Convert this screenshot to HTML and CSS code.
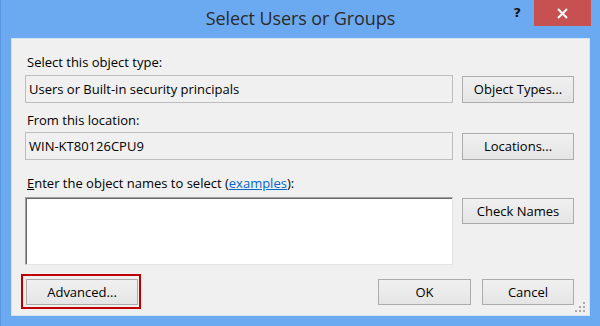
FILE: index.html
```html
<!DOCTYPE html>
<html lang="en">
<head>
  <meta charset="UTF-8">
  <meta name="viewport" content="width=device-width, initial-scale=1.0">
  <title>Select Users or Groups</title>
  <link rel="stylesheet" href="styles.css">
</head>
<body>
  <div class="window">
    <div class="titlebar">
      <span></span>
      <h1 class="title">Select Users or Groups</h1>
      <div class="controls">
        <span class="help">?</span>
        <span class="close">
          <svg width="11" height="11" viewBox="0 0 11 11">
            <path d="M1 1 L10 10 M10 1 L1 10" stroke="#fff" stroke-width="2"/>
          </svg>
        </span>
      </div>
    </div>

    <div class="panel">
      <div class="label">Select this object type:</div>
      <div class="row">
        <div class="field">Users or Built-in security principals</div>
        <button class="btn">Object Types...</button>
      </div>

      <div class="label label-loc">From this location:</div>
      <div class="row">
        <div class="field">WIN-KT80126CPU9</div>
        <button class="btn">Locations...</button>
      </div>

      <div class="label label-names"><u>E</u>nter the object names to select (<a href="#">examples</a>):</div>
      <div class="row row-names">
        <div class="names"></div>
        <button class="btn btn-check">Check Names</button>
      </div>

      <div class="actions">
        <div class="highlight">
          <button class="btn btn-advanced">Advanced...</button>
        </div>
        <button class="btn btn-ok">OK</button>
        <button class="btn btn-cancel">Cancel</button>
      </div>

      <!-- size grip in the corner -->
      <svg class="grip" width="12" height="12" viewBox="0 0 12 12">
        <g fill="#a9a9a9">
          <rect x="9" y="1" width="2" height="2"/>
          <rect x="5" y="5" width="2" height="2"/>
          <rect x="9" y="5" width="2" height="2"/>
          <rect x="1" y="9" width="2" height="2"/>
          <rect x="5" y="9" width="2" height="2"/>
          <rect x="9" y="9" width="2" height="2"/>
        </g>
      </svg>
    </div>
  </div>
</body>
</html>
```

FILE: styles.css
```css
body {
  margin: 0;
  font-family: 'Open Sans', 'Noto Sans', sans-serif;
  font-size: 13px;
  color: #000;
}

.window {
  width: 600px;
  height: 326px;
  box-sizing: border-box;
  background-color: #6baaf0;
  border-left: 1px solid #5b97e0;
  padding: 0 10px 10px 10px;
}

.titlebar {
  display: grid;
  grid-template-columns: 1fr auto 1fr;
  height: 38px;
  margin: 0 -10px 0 -10px;
}

.title {
  margin: 0;
  padding-top: 5px;
  font-weight: normal;
  font-size: 18px;
  letter-spacing: -0.1px;
  line-height: 26px;
  color: #2b2b2b;
}

.controls {
  justify-self: end;
  display: flex;
  align-items: flex-start;
  margin-right: 9px;
}

.help {
  font-family: 'DejaVu Sans', sans-serif;
  font-weight: bold;
  font-size: 13px;
  line-height: 26px;
  margin-right: 13px;
  color: #111;
}

.close {
  width: 57px;
  height: 26px;
  background-color: #c75050;
  display: flex;
  align-items: center;
  justify-content: center;
}

.panel {
  position: relative;
  height: 278px;
  box-sizing: border-box;
  background-color: #f0f0f0;
  border: 1px solid #d6e3f2;
  padding: 15px 15px 0 13px;
}

.label {
  line-height: 16px;
  margin-left: 2px;
  margin-bottom: 5px;
}

.label-loc {
  margin-top: 9px;
  margin-bottom: 4px;
}

.label-names {
  margin-top: 15px;
  margin-bottom: 6px;
}

.label a {
  color: #0066cc;
}

.row {
  display: grid;
  grid-template-columns: 428px 112px;
  column-gap: 9px;
  align-items: center;
}

.field {
  height: 28px;
  box-sizing: border-box;
  border: 1px solid #bdbdbd;
  padding-left: 3px;
  line-height: 26px;
  background-color: #f0f0f0;
}

.names {
  height: 68px;
  box-sizing: border-box;
  background-color: #fff;
  border-top: 1px solid #a0a0a0;
  border-left: 1px solid #a0a0a0;
  border-right: 1px solid #e3e3e3;
  border-bottom: 1px solid #e3e3e3;
  box-shadow: inset 1px 1px 0 #696969;
}

.row-names {
  align-items: start;
}

.btn {
  height: 27px;
  box-sizing: border-box;
  border: 1px solid #acacac;
  background: linear-gradient(#f0f0f0, #e5e5e5);
  font-family: inherit;
  font-size: 13px;
  color: #000;
  padding: 0;
}

.btn-check {
  margin-top: 1px;
  height: 26px;
}

.actions {
  display: flex;
  align-items: center;
  margin-top: 9px;
  margin-left: -4px;
}

.highlight {
  border: 2px solid #c00000;
  padding: 3px 1px 2px 3px;
}

.btn-advanced {
  width: 112px;
  height: 26px;
  display: block;
}

.btn-ok {
  width: 93px;
  height: 26px;
  margin-left: auto;
}

.btn-cancel {
  width: 92px;
  height: 26px;
  margin-left: 11px;
}

.grip {
  position: absolute;
  right: 3px;
  bottom: 2px;
}
```
